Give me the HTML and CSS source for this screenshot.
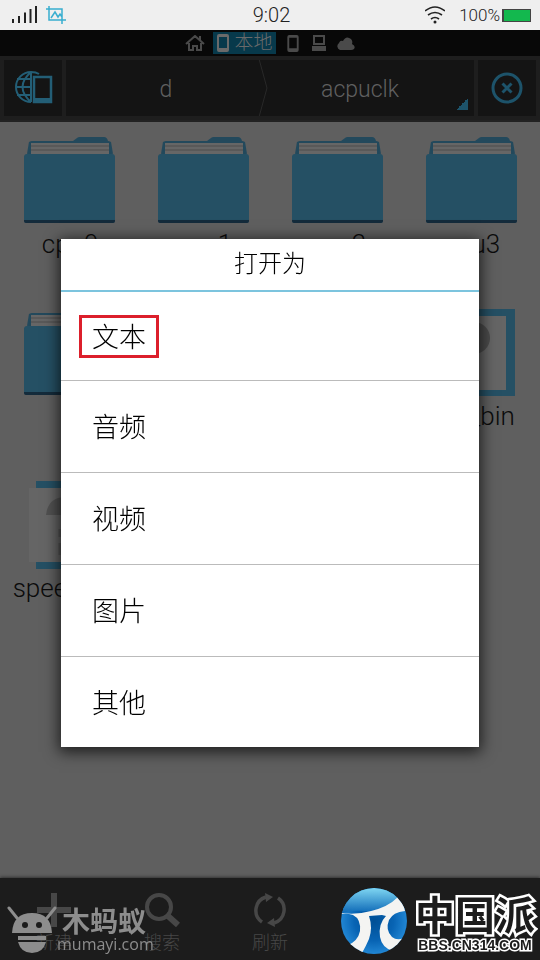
FILE: index.html
```html
<!DOCTYPE html>
<html lang="zh-CN">
<head>
  <meta charset="UTF-8">
  <meta name="viewport" content="width=device-width, initial-scale=1.0">
  <title>acpuclk</title>
  <link rel="stylesheet" href="styles.css">
</head>
<body>
  <svg class="defs" width="0" height="0" aria-hidden="true">
    <symbol id="folder" viewBox="0 0 92 88">
      <path d="M5 20V7q0-3 3-3h41l4-3q1-1 3-1h24q3 0 4 4 3 0 3 3v13z" fill="#23495c"/>
      <path d="M7 17V6h78v11z" fill="#666"/>
      <path d="M7 9h78M7 13h78" stroke="#4c4c4c"/>
      <path d="M4 17L6 5M88 17L86 5" stroke="#23495c" stroke-width="2"/>
      <rect x="0" y="17" width="91" height="69" rx="3" fill="#255064"/>
      <path d="M0 83h91v1q0 2-2 2H2q-2 0-2-2z" fill="#142b3b"/>
    </symbol>
    <symbol id="file" viewBox="0 0 92 88">
      <path d="M12 0h74v88H12z" fill="#255064"/>
      <path d="M5 7h78v74H5z" fill="#656565"/>
      <path d="M22 34q2-18 20-18t20 18z" fill="#515151"/>
      <path d="M36 48v8M36 62v12" stroke="#555" stroke-width="3"/>
    </symbol>
    <symbol id="phone" viewBox="0 0 12 18">
      <path d="M2 0h8q2 0 2 2v14q0 2-2 2H2q-2 0-2-2V2q0-2 2-2zM2 3v11h8V3z" fill="currentColor" fill-rule="evenodd"/>
    </symbol>
  </svg>

  <header class="status-bar">
    <div class="status-left">
      <svg width="26" height="18" viewBox="0 0 26 18"><path d="M1 17v-4M7 17v-7M13 17V6.500M18.500 17V3M24 17V0" stroke="#222" stroke-width="2"/></svg>
      <svg width="20" height="18" viewBox="0 0 20 18" fill="none" stroke="#39aed0" stroke-width="1.500"><path d="M3 0v14h17M0 3h16v15M5 12l4-6 3 5 2-3 2 3"/></svg>
    </div>
    <time class="clock">9:02</time>
    <div class="status-right">
      <svg width="20" height="18" viewBox="0 0 20 18" fill="none" stroke="#222" stroke-width="1.600"><path d="M0 5q10-8 20 0M3 9q7-5 14 0M6 13q4-3 8 0"/><circle cx="10" cy="16" r="1.500" fill="#222" stroke="none"/></svg>
      <span class="percent">100%</span>
      <span class="battery"></span>
    </div>
  </header>

  <nav class="tabs">
    <a href="#home" aria-label="主页"><svg width="20" height="16" viewBox="0 0 20 16" fill="none" stroke="currentColor" stroke-width="2"><path d="M1 9l9-8 9 8M4 8v7h4v-4h4v4h4V8M15 1v4"/></svg></a>
    <a href="#local" class="active"><svg width="12" height="18"><use href="#phone"/></svg>本地</a>
    <a href="#sd" aria-label="存储卡"><svg width="12" height="17"><use href="#phone"/></svg></a>
    <a href="#lan" aria-label="局域网"><svg width="14" height="16" viewBox="0 0 14 16"><path d="M1 0h12v10H1zM3 2v6h8V2zM0 11h14v5H0z" fill="currentColor" fill-rule="evenodd"/></svg></a>
    <a href="#cloud" aria-label="网盘"><svg width="19" height="13" viewBox="0 0 19 13"><path d="M4 13a4 4 0 0 1-1-7q1-3 4-2 3-6 8-2 2 2 1 5 4 2 2 5-1 1-3 1z" fill="currentColor"/></svg></a>
  </nav>

  <div class="path-bar">
    <button class="path-side" aria-label="切换窗口">
      <svg width="40" height="34" viewBox="0 0 40 34" fill="none" stroke="#235e76" stroke-width="2"><path d="M18 1a15 15 0 0 0 0 30M18 1v30M18 1q-17 15 0 30M3 16h15M4 8h14M4 24h14M18 1q5 0 8 2"/><path d="M21 6h17v25H21z" stroke-width="2.500"/><path d="M21 29h17" stroke-width="4"/></svg>
    </button>
    <div class="crumbs">
      <button class="crumb">d</button>
      <svg class="crumb-sep" width="10" height="58" viewBox="0 0 10 58" fill="none" stroke="#292929"><path d="M1 0l8 29-8 29"/></svg>
      <button class="crumb current">acpuclk</button>
    </div>
    <button class="path-side" aria-label="关闭">
      <svg width="32" height="32" viewBox="0 0 32 32" fill="none" stroke="#1d536a" stroke-width="3"><circle cx="16" cy="16" r="14"/><path d="M11.500 11.500l9 9M20.500 11.500l-9 9"/></svg>
    </button>
  </div>

  <main class="files">
    <ul class="grid">
      <li><svg class="tile"><use href="#folder"/></svg>cpu0</li>
      <li><svg class="tile"><use href="#folder"/></svg>cpu1</li>
      <li><svg class="tile"><use href="#folder"/></svg>cpu2</li>
      <li><svg class="tile"><use href="#folder"/></svg>cpu3</li>
      <li><svg class="tile"><use href="#folder"/></svg>l2</li>
      <li class="last-column"><svg class="tile" viewBox="0 0 92 88"><path d="M2 0h87v87H2z" fill="#255064"/><path d="M11 7h69v74H11z" fill="#656565"/><circle cx="48" cy="29" r="16" fill="#4b4b4b"/></svg>pvs_bin</li>
      <li><svg class="tile"><use href="#file"/></svg>speed_bin</li>
    </ul>
  </main>

  <footer class="toolbar">
    <button><svg width="34" height="34" viewBox="0 0 34 34"><path d="M17 0v34M0 17h34" stroke="currentColor" stroke-width="6"/></svg>新建</button>
    <button><svg width="36" height="34" viewBox="0 0 36 34" fill="none" stroke="currentColor"><circle cx="15" cy="14" r="12" stroke-width="4"/><path d="M24 23l10 9" stroke-width="6"/></svg>搜索</button>
    <button><svg width="34" height="34" viewBox="0 0 34 34" fill="none" stroke="currentColor" stroke-width="3.500"><path d="M9 29A14 14 0 0 1 13 4M25 5A14 14 0 0 1 21 30"/><path d="M12 0l8 4-7 5zM22 34l-8-4 7-5z" fill="currentColor" stroke="none"/></svg>刷新</button>
  </footer>

  <div class="overlay">
    <section class="dialog" role="dialog" aria-labelledby="dialog-title">
      <h1 id="dialog-title">打开为</h1>
      <button class="option"><span class="marked">文本</span></button>
      <button class="option"><span>音频</span></button>
      <button class="option"><span>视频</span></button>
      <button class="option"><span>图片</span></button>
      <button class="option"><span>其他</span></button>
    </section>
  </div>

  <!-- site marks in the bottom corners -->
  <div class="mark mark-left">
    <svg width="50" height="48" viewBox="0 0 50 48" fill="#8d8d8d">
      <path d="M2 2l8 10M48 2l-8 10" stroke="#8d8d8d" stroke-width="3" stroke-linecap="round"/>
      <path d="M5 27Q6 7 25 7t20 20z"/>
      <path d="M11 30h28v4H11z"/>
      <path d="M11 36h28q-3 11-14 11T11 36z"/>
      <circle cx="18" cy="19" r="3" fill="#1c1c1c"/><circle cx="32" cy="19" r="3" fill="#1c1c1c"/>
    </svg>
    <div class="mark-text">
      <span class="mark-name">木蚂蚁</span>
      <span class="mark-url">mumayi.com</span>
    </div>
  </div>
  <div class="mark mark-right">
    <svg width="66" height="66" viewBox="0 0 66 66">
      <defs>
        <radialGradient id="ball" cx="50%" cy="50%" r="50%">
          <stop offset="0" stop-color="#004f95"/>
          <stop offset=".6" stop-color="#0864b4"/>
          <stop offset="1" stop-color="#2186d3"/>
        </radialGradient>
        <linearGradient id="shine" x1="0" y1="0" x2="0" y2="1">
          <stop offset="0" stop-color="#7fd6f2"/>
          <stop offset="1" stop-color="#0864b4"/>
        </linearGradient>
        <clipPath id="round"><circle cx="33" cy="33" r="33"/></clipPath>
      </defs>
      <g clip-path="url(#round)">
        <path d="M0 0h66v66H0z" fill="url(#ball)"/>
        <path d="M0 26Q4 0 33 0q18 0 25 9-15 15-34 14Q8 22 0 26z" fill="url(#shine)"/>
        <path d="M0 25q16 2 30-2 17-4 27-14l6 9 1 5q-12 1-16 9-4 10 3 17 5 4 12 1-3 9-11 13-11-3-13-14-2-13 6-21l-4-1-13 1q4 12 0 23-3 7-7 14-8-1-14-8 10-4 12-14 1-12-7-16-6-2-12-1z" fill="#f4f4f2"/>
      </g>
    </svg>
    <div class="mark-text">
      <span class="brand">中国派</span>
      <span class="brand-url">BBS.CN314.COM</span>
    </div>
  </div>
</body>
</html>
```

FILE: styles.css
```css
* {
  margin: 0;
  padding: 0;
  box-sizing: border-box;
}

body {
  font-family: Roboto, 'Noto Sans CJK SC', sans-serif;
  font-weight: 300;
  min-height: 100vh;
  display: flex;
  flex-direction: column;
  background: #5f5f5f;
  color: #0b0b0b;
}

button {
  font: inherit;
  color: inherit;
  background: none;
  border: none;
  cursor: pointer;
}

svg {
  display: block;
  flex: none;
}

.defs {
  position: absolute;
}

.status-bar {
  height: 30px;
  padding: 0 9px 0 12px;
  display: grid;
  grid-template-columns: 1fr auto 1fr;
  align-items: center;
  background: #efefef;
  color: #222;
}

.status-left,
.status-right {
  display: flex;
  align-items: center;
  gap: 8px;
}

.status-right {
  justify-content: flex-end;
  gap: 0;
}

.clock {
  font-size: 20px;
}

.percent {
  margin-left: 14px;
  font-size: 17px;
}

.battery {
  width: 29px;
  height: 13px;
  margin-left: 2px;
  background: #13b84e;
  border: 1px solid #444;
  border-left-width: 2px;
}

.tabs {
  height: 26px;
  display: flex;
  align-items: center;
  justify-content: center;
  gap: 8px;
  background: #080808;
}

.tabs a {
  display: flex;
  align-items: center;
  justify-content: center;
  min-width: 18px;
  color: #4a4a4a;
  text-decoration: none;
}

.tabs .active {
  height: 22px;
  padding: 0 3px 0 4px;
  gap: 5px;
  font-size: 19px;
  line-height: 22px;
  background: #07394b;
  color: #6a6a6a;
}

.path-bar {
  height: 66px;
  padding: 4px;
  display: flex;
  gap: 4px;
  background: #1e1e1e;
  border-bottom: 2px solid #222;
}

.path-side {
  width: 58px;
  display: flex;
  align-items: center;
  justify-content: center;
  background: #141414;
}

.crumbs {
  flex: 1;
  display: flex;
  align-items: center;
  background: #141414;
  overflow: hidden;
}

.crumb {
  flex: 1;
  align-self: stretch;
  padding: 2px 0 0 8px;
  font-size: 23px;
  color: #606060;
}

.crumb.current {
  padding: 2px 22px 0 0;
  background: linear-gradient(135deg, transparent 50%, #1d536a 50%) no-repeat right 6px bottom 6px / 12px 12px;
}

.files {
  flex: 1;
  padding: 15px 1px 15px 3px;
}

.grid {
  display: grid;
  grid-template-columns: repeat(4, 1fr);
  grid-auto-rows: 172px;
  list-style: none;
}

.grid li {
  display: flex;
  flex-direction: column;
  align-items: center;
  gap: 3px;
  font-size: 26px;
  line-height: 32px;
}

.tile {
  width: 92px;
  height: 88px;
}

.last-column {
  grid-column: 4;
}

.toolbar {
  height: 82px;
  display: grid;
  grid-template-columns: repeat(5, 1fr);
  background: #1c1c1c;
  box-shadow: 0 -1px 3px #333;
}

.toolbar button {
  display: flex;
  flex-direction: column;
  align-items: center;
  justify-content: center;
  gap: 4px;
  padding-top: 10px;
  font-size: 18px;
  line-height: 24px;
  color: #474747;
}

.overlay {
  position: fixed;
  inset: 30px 0 0;
  padding-bottom: 4px;
  display: flex;
  align-items: center;
  justify-content: center;
}

.dialog {
  width: calc(100% - 122px);
  display: flex;
  flex-direction: column;
  background: #fff;
  box-shadow: 0 3px 14px 2px rgba(0, 0, 0, 0.7);
  color: #000;
}

.dialog h1 {
  height: 53px;
  border-bottom: 2px solid #7cc4de;
  font-size: 24px;
  font-weight: 300;
  line-height: 50px;
  text-align: center;
}

.option {
  height: 92px;
  padding: 0 18px;
  display: flex;
  align-items: center;
  border-bottom: 1px solid #bbb;
  font-size: 27px;
}

.option:nth-child(2) {
  height: 89px;
}

.option:last-child {
  height: 90px;
  border-bottom: none;
}

.option span {
  padding: 3px 10px 0;
  border: 3px solid transparent;
  line-height: 34px;
}

.option .marked {
  border-color: #dc1f2b;
}

.mark {
  position: fixed;
  display: flex;
  pointer-events: none;
}

.mark-text {
  display: flex;
  flex-direction: column;
}

.mark-left {
  left: 7px;
  bottom: 6px;
  color: #8d8d8d;
}

.mark-name {
  padding-left: 5px;
  font-family: 'Noto Sans CJK SC', sans-serif;
  font-size: 28px;
  font-weight: 700;
  line-height: 28px;
}

.mark-url {
  font-family: 'Open Sans', sans-serif;
  font-size: 16px;
  font-weight: 400;
  line-height: 20px;
}

.mark-right {
  right: 5px;
  bottom: 6px;
  gap: 8px;
  align-items: flex-end;
}

.mark-right .mark-text {
  align-items: center;
}

.brand,
.brand-url {
  color: #1c1c1c;
  -webkit-text-stroke: 5px #fff;
  paint-order: stroke fill;
}

.brand {
  font-family: 'Noto Sans CJK SC', sans-serif;
  font-size: 40px;
  font-weight: 700;
  line-height: 46px;
}

.brand-url {
  font-family: 'Liberation Sans', sans-serif;
  font-size: 14px;
  font-weight: 700;
  line-height: 18px;
  -webkit-text-stroke-width: 3px;
}
```
